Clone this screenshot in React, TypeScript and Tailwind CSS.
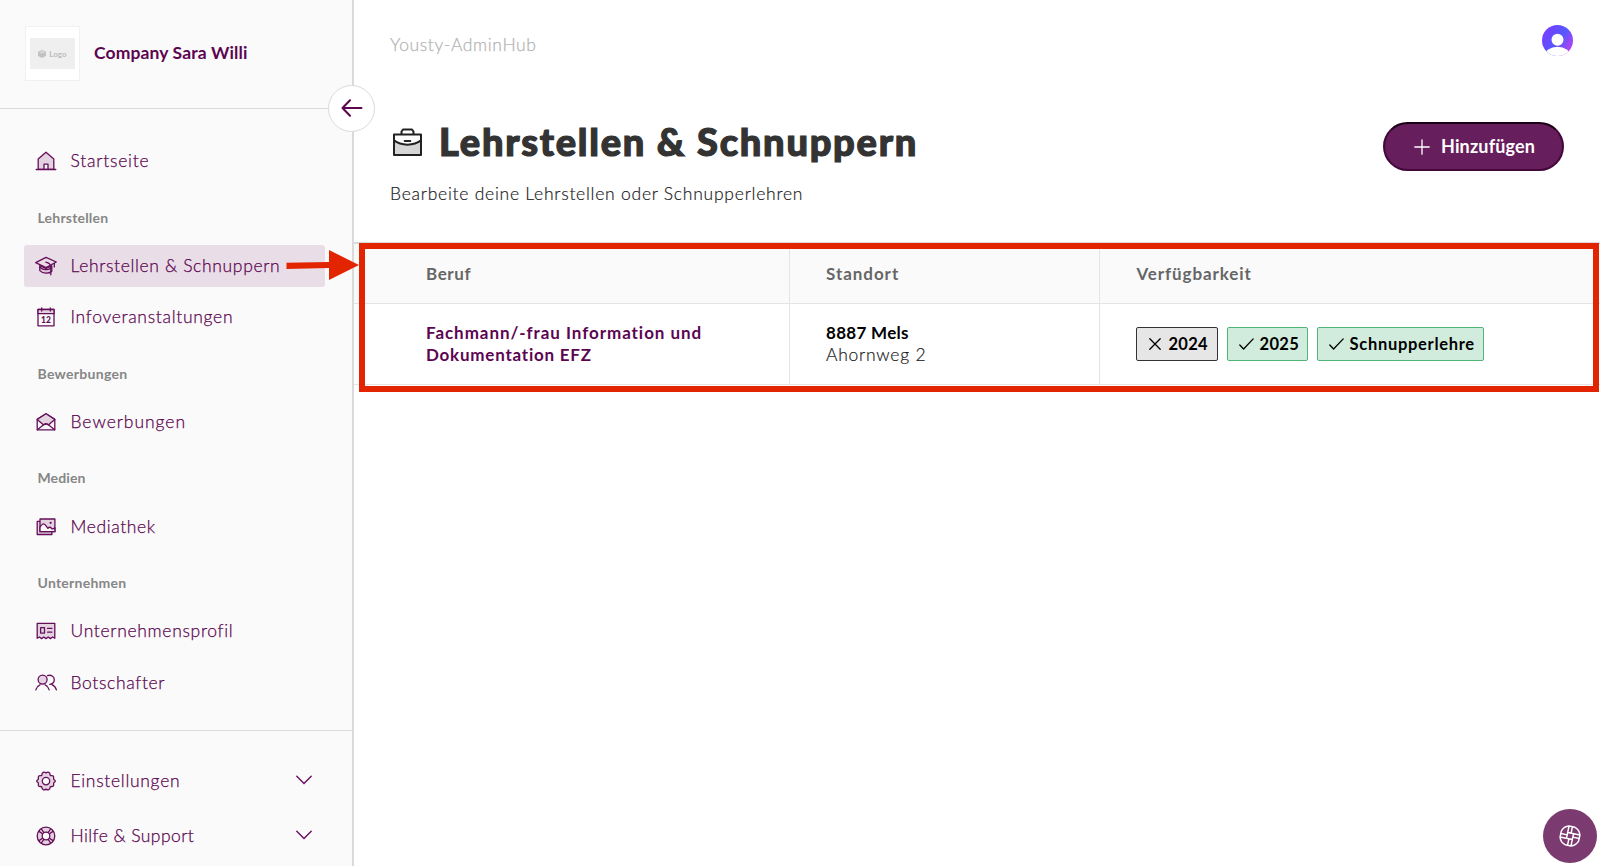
import type { ReactNode } from "react";

const ICON = "#650e5a";
const TINT = "#e3d2e0";

function Icon({ children, size = 24 }: { children: ReactNode; size?: number }) {
  return (
    <svg
      width={size}
      height={size}
      viewBox="0 0 24 24"
      fill="none"
      stroke={ICON}
      strokeWidth="1.3"
      strokeLinecap="round"
      strokeLinejoin="round"
      className="shrink-0"
    >
      {children}
    </svg>
  );
}

const HomeIcon = () => (
  <Icon>
    <path d="M4.2 20.3V10L12 3.2 19.8 10v10.3Z" fill={TINT} />
    <path d="M10 20.3v-5.1h4v5.1Z" fill="#fafafa" />
    <path d="M2.2 20.5h19.6" />
  </Icon>
);

const CapIcon = () => (
  <Icon>
    <path d="M5.8 11.6v5c3 3.2 9 3.500 12 .6v-5.400L12 14.500Z" fill="#dcc6d8" />
    <path d="M12 3.300 22.300 8 12 13.600 1.700 8.600Z" fill="#eadde8" />
    <path d="M5.800 13.200c2.800 2.800 7.800 3.400 11.200.7" />
    <path d="M11.800 8.200c3 .7 5 2 5 5v7.600M20.300 9.400v3.500" />
  </Icon>
);

const CalendarIcon = () => (
  <Icon>
    <path d="M4 4.5h16v16.3H4Z" />
    <path d="M4 4.5h16v4.2H4Z" fill={TINT} />
    <path d="M7.7 3v3M16.3 3v3" />
    <text
      x="12"
      y="17.9"
      textAnchor="middle"
      fontSize="8.5"
      fontWeight="900"
      fontFamily="Lato, sans-serif"
      fill={ICON}
      stroke="none"
    >
      12
    </text>
  </Icon>
);

const MailIcon = () => (
  <Icon>
    <path d="M3.2 9.4 12 3.8l8.8 5.6v10.5H3.2Z" />
    <path d="M3.2 9.4 12 3.8l8.8 5.6-6.2 5.4-2.6-1-2.6 1Z" fill={TINT} />
    <path d="m3.4 19.7 6.2-5 2.4-1 2.4 1 6.2 5" />
  </Icon>
);

const GalleryIcon = () => (
  <Icon>
    <path d="M5.6 6.4H3.2v13.1h14.7v-2.4" fill={TINT} />
    <path d="M6 4h14.9v12.7H6Z" fill={TINT} />
    <path d="M6 12.3c2-3.8 3.8-4.3 5.5-2.1l2.4 3.2c1.3-1.5 2.5-1.5 3.5-.2.9 1 2 .8 3.5-.5v4H6Z" fill="#fafafa" />
    <circle cx="16.6" cy="7.8" r=".5" />
  </Icon>
);

const ProfileIcon = () => (
  <Icon>
    <path d="M3.2 4.3h17.6v15l-2.2-1.3-2.2 1.6-2.2-1.6L12 19.6 9.8 18l-2.2 1.6L5.4 18l-2.2 1.3Z" fill={TINT} />
    <path d="M6.6 8.7h3.9v5.4H6.6ZM13.6 9.4h4.3M13.6 13.2h4.3" />
  </Icon>
);

const PeopleIcon = () => (
  <Icon>
    <circle cx="8.6" cy="8.6" r="4.5" fill={TINT} />
    <path d="M1.8 18.8c.6-2.3 2-3.9 4.2-4.9M11.2 13.9c2 .9 3.4 2.4 4 4.9" />
    <path d="M13.5 4.7c3.5-1.4 6.8.8 6.8 4 0 2.8-2 4.7-4.6 4.6M17.6 13.3c2.4.9 4.1 2.9 4.8 5.5" />
  </Icon>
);

const GearIcon = () => (
  <Icon>
    <path
      d="M9.2 3.4c1-.7 1.7-.3 2.8.5 1.1-.8 1.8-1.2 2.8-.5 1.2.6 1.4 1.5 1.4 2.9 1.3.5 2.3.1 3.1.8.6.6.5 1.3.3 2.2-.2 1 .2 1.3 1.2 1.9.7.5.7 1.2 0 1.7-1 .6-1.4.9-1.2 1.9.2 1 .3 1.6-.3 2.2-.8.7-1.8.3-3.1.8 0 1.4-.2 2.3-1.4 2.9-1 .6-1.7.2-2.8-.6-1.1.8-1.8 1.2-2.8.6-1.2-.6-1.4-1.5-1.4-2.9-1.3-.5-2.3-.1-3.1-.8-.6-.6-.5-1.2-.3-2.2.2-1-.2-1.3-1.2-1.9-.7-.5-.7-1.2 0-1.7 1-.6 1.400-.9 1.200-1.900-.2-.9-.3-1.600.3-2.200.8-.7 1.800-.3 3.100-.8 0-1.400.2-2.300 1.400-2.900Z"
      fill={TINT}
    />
    <circle cx="12" cy="12.1" r="3.7" fill="#fafafa" />
  </Icon>
);

const HelpIcon = () => (
  <Icon>
    <circle cx="12" cy="12" r="8.8" fill={TINT} />
    <path d="M5 7.4 8.9 10M7.4 5 10 8.9M19 7.4 15.1 10M16.6 5 14 8.9M5 16.6 8.9 14M7.4 19 10 15.1M19 16.6 15.1 14M16.6 19 14 15.1" />
    <circle cx="12" cy="12" r="3.8" fill="#fafafa" />
  </Icon>
);

const ChevronIcon = () => (
  <svg width="18" height="12" viewBox="0 0 18 12" fill="none" stroke={ICON} strokeWidth="1.4" strokeLinecap="round">
    <path d="m1.8 1.3 7.2 7.1 7.2-7.1" />
  </svg>
);

const CheckIcon = () => (
  <svg width="15" height="12" viewBox="0 0 15 12" fill="none" stroke="#000" strokeWidth="1.3" strokeLinecap="round">
    <path d="m.8 7 3.8 4L14.2.9" />
  </svg>
);

const CrossIcon = () => (
  <svg width="12" height="12" viewBox="0 0 12 12" fill="none" stroke="#000" strokeWidth="1.3" strokeLinecap="round">
    <path d="m.8.8 10.4 10.4M11.2.8.8 11.2" />
  </svg>
);

interface NavItemProps {
  icon: ReactNode;
  label: string;
  tracking: string;
  active?: boolean;
}

function NavItem({ icon, label, tracking, active }: NavItemProps) {
  return (
    <a className={`flex h-[42px] items-center rounded-[3px] pl-[9.5px] ${active ? "bg-[#e9dde7]" : ""}`}>
      {icon}
      <span
        className={`ml-[13px] whitespace-nowrap text-[17.5px] leading-[22px] font-light text-[#5c0551] [-webkit-text-stroke:0.25px_#5c0551] ${tracking}`}
      >
        {label}
      </span>
    </a>
  );
}

function NavSection({ title, tracking, children }: { title: string; tracking: string; children: ReactNode }) {
  return (
    <div>
      <div className={`h-[62.7px] pt-[25.5px] pl-[13.5px] text-[14px] leading-[20px] font-bold text-[#868686] ${tracking}`}>
        {title}
      </div>
      <div className="flex flex-col gap-[9.4px]">{children}</div>
    </div>
  );
}

function Sidebar() {
  return (
    <aside className="relative flex w-[354px] shrink-0 flex-col border-r-2 border-[#dadada] bg-[#fafafa]">
      <div className="flex h-[109px] shrink-0 items-center border-b border-[#dadada] pb-[1px] pl-[25px]">
        <div className="flex h-[55px] w-[55px] items-center justify-center border border-[#f1f1f1] bg-white">
          <div className="flex h-[31px] w-[45px] items-center justify-center gap-[3px] bg-[#efefef]">
            <svg width="8" height="8" viewBox="0 0 8 8" fill="#c2c2c4">
              <path d="M4 0 8 1.8v4.2L4 8 0 6V1.8Z" />
              <path d="M4 .9 6.8 2.2 4 3.5 1.2 2.2Z" fill="#dcdcde" />
            </svg>
            <span className="text-[8px] leading-none font-bold text-[#bcbcbe]">Logo</span>
          </div>
        </div>
        <span className="ml-[14px] text-[17.5px] font-bold tracking-[0.12px] text-[#5c0551]">Company Sara Willi</span>
      </div>

      <nav className="h-[622px] shrink-0 border-b border-[#dadada] pt-[31.2px] pr-[27px] pl-[24px]">
        <NavItem icon={<HomeIcon />} label="Startseite" tracking="tracking-[0.77px]" />
        <NavSection title="Lehrstellen" tracking="tracking-[0.2px]">
          <NavItem icon={<CapIcon />} label="Lehrstellen & Schnuppern" tracking="tracking-[0.65px]" active />
          <NavItem icon={<CalendarIcon />} label="Infoveranstaltungen" tracking="tracking-[0.7px]" />
        </NavSection>
        <NavSection title="Bewerbungen" tracking="tracking-[0.3px]">
          <NavItem icon={<MailIcon />} label="Bewerbungen" tracking="tracking-[0.95px]" />
        </NavSection>
        <NavSection title="Medien" tracking="tracking-[0.1px]">
          <NavItem icon={<GalleryIcon />} label="Mediathek" tracking="tracking-[0.6px]" />
        </NavSection>
        <NavSection title="Unternehmen" tracking="tracking-[0.25px]">
          <NavItem icon={<ProfileIcon />} label="Unternehmensprofil" tracking="tracking-[0.68px]" />
          <NavItem icon={<PeopleIcon />} label="Botschafter" tracking="tracking-[0.65px]" />
        </NavSection>
      </nav>

      <div className="flex flex-col gap-[13px] pt-[29px] pr-[39px] pl-[24px]">
        <div className="flex items-center justify-between">
          <NavItem icon={<GearIcon />} label="Einstellungen" tracking="tracking-[0.7px]" />
          <ChevronIcon />
        </div>
        <div className="flex items-center justify-between">
          <NavItem icon={<HelpIcon />} label="Hilfe & Support" tracking="tracking-[0.43px]" />
          <ChevronIcon />
        </div>
      </div>

      <button className="absolute top-[84.5px] left-[328px] flex size-[47px] items-center justify-center rounded-full border border-[#dadada] bg-white">
        <svg width="22" height="18" viewBox="0 0 22 18" fill="none" stroke="#5c0551" strokeWidth="2" strokeLinecap="round" strokeLinejoin="round">
          <path d="M20.500 9H1.500M9 1.200 1.500 9 9 16.800" />
        </svg>
      </button>
    </aside>
  );
}

function Badge({ label, ok, tracking, width }: { label: string; ok?: boolean; tracking: string; width: string }) {
  return (
    <span
      className={`flex h-[34px] items-center rounded-[2px] border text-[16.5px] font-bold text-black ${width} ${tracking} ${
        ok ? "gap-[5.5px] border-[#4fb477] bg-[#d1ecdd] pl-[11px]" : "gap-[7.5px] border-[#333] bg-[#e6e6e6] pl-[12px]"
      }`}
    >
      {ok ? <CheckIcon /> : <CrossIcon />}
      <span className="whitespace-nowrap">{label}</span>
    </span>
  );
}

function JobsTable() {
  return (
    <div className="border-t-2 border-b border-t-[#dadada] border-b-[#e4e4e4]">
      <div className="grid h-[60px] grid-cols-[436px_310px_1fr] border-b border-[#e4e4e4] bg-[#fafafa] text-[17px] leading-[22px] font-bold text-[#666]">
        <div className="border-r border-[#e4e4e4] pt-[18.5px] pl-[72px] tracking-[0.6px]">Beruf</div>
        <div className="border-r border-[#e4e4e4] pt-[18.5px] pl-[36px] tracking-[0.95px]">Standort</div>
        <div className="pt-[18.5px] pl-[36.5px] tracking-[0.9px]">Verfügbarkeit</div>
      </div>
      <div className="grid h-[80px] grid-cols-[436px_310px_1fr] text-[17px] leading-[22.4px]">
        <div className="border-r border-[#e4e4e4] pt-[17.6px] pl-[72px] font-bold text-[#5c0551]">
          <div className="tracking-[0.94px]">Fachmann/-frau Information und</div>
          <div className="tracking-[0.77px]">Dokumentation EFZ</div>
        </div>
        <div className="border-r border-[#e4e4e4] pt-[17.6px] pl-[36px]">
          <div className="font-bold tracking-[0.3px] text-black">8887 Mels</div>
          <div className="text-[17.5px] font-light tracking-[0.75px] text-[#222] [-webkit-text-stroke:0.2px_#222]">
            Ahornweg 2
          </div>
        </div>
        <div className="flex items-start gap-[9px] pt-[23px] pl-[36px]">
          <Badge label="2024" width="w-[82px]" tracking="tracking-[0.3px]" />
          <Badge label="2025" width="w-[81px]" tracking="tracking-[0.35px]" ok />
          <Badge label="Schnupperlehre" width="w-[167px]" tracking="tracking-[0.7px]" ok />
        </div>
      </div>
    </div>
  );
}

export default function App() {
  return (
    <div className="relative flex h-[866px] w-[1600px] overflow-hidden bg-white font-['Lato',sans-serif]">
      <Sidebar />

      <main className="flex min-w-0 flex-1 flex-col">
        <header className="flex h-[90px] shrink-0 justify-between pr-[27px] pl-[36px]">
          <span className="pt-[34px] text-[17.5px] leading-[22px] font-light tracking-[0.62px] text-[#b4b4b4] [-webkit-text-stroke:0.25px_#b4b4b4]">
            Yousty-AdminHub
          </span>
          <svg width="31" height="31" viewBox="0 0 31 31" className="mt-[25px]">
            <defs>
              <linearGradient id="avatar" x1="0" y1="0.2" x2="1" y2="0.8">
                <stop offset="0" stopColor="#7a3cff" />
                <stop offset=".55" stopColor="#5558ff" />
                <stop offset="1" stopColor="#c63df0" />
              </linearGradient>
              <clipPath id="round">
                <circle cx="15.5" cy="15.5" r="15.5" />
              </clipPath>
            </defs>
            <g clipPath="url(#round)">
              <rect width="31" height="31" fill="url(#avatar)" />
              <circle cx="15.5" cy="14.8" r="6" fill="#fff" />
              <ellipse cx="15.5" cy="31" rx="13" ry="9.3" fill="#fff" />
            </g>
          </svg>
        </header>

        <div className="flex h-[152px] shrink-0 justify-between pr-[36px] pl-[36px]">
          <div>
            <div className="flex h-[80px] items-center pt-[24px]">
              <svg width="31" height="29" viewBox="0 0 31 29" fill="none" stroke="#222" strokeWidth="2" strokeLinejoin="round" className="ml-[2px]">
                <path d="M2 11.5c7 6.3 20 6.3 27 0V27H2Z" fill="#d6d6d6" stroke="none" />
                <path d="M2 6.5h27V27H2ZM9.5 6.500v-3l1.500-2h9l1.500 2v3M2 12.300c7 5.800 20 5.800 27 0" />
                <path d="M12.700 13h5.600" strokeLinecap="round" />
              </svg>
              <h1 className="-mt-[2px] ml-[16px] text-[38px] leading-[44px] font-black tracking-[1.75px] whitespace-nowrap text-[#333] [-webkit-text-stroke:1.2px_#333]">
                Lehrstellen &amp; Schnuppern
              </h1>
            </div>
            <p className="pt-[13px] text-[17.5px] leading-[22px] font-light tracking-[0.75px] text-[#222] [-webkit-text-stroke:0.2px_#222]">
              Bearbeite deine Lehrstellen oder Schnupperlehren
            </p>
          </div>
          <button className="mt-[32px] flex h-[49px] w-[181px] items-center rounded-full border-2 border-[#43073a] border-t-[#1c0018] bg-[#671e5c] pl-[29px] text-[18px] font-bold text-white">
            <svg width="16" height="16" viewBox="0 0 16 16" stroke="#fff" strokeWidth="1.3" strokeLinecap="round">
              <path d="M8 .8v14.4M.8 8h14.4" />
            </svg>
            <span className="ml-[11px] tracking-[0.15px]">Hinzufügen</span>
          </button>
        </div>

        <JobsTable />
      </main>

      {/* callout around the table */}
      <div className="absolute top-[242.5px] left-[359px] h-[149px] w-[1240px] border-6 border-[#e32400]" />
      <svg width="74" height="32" viewBox="0 0 74 32" className="absolute top-[249px] left-[286px]">
        <path d="M.5 13.7 43 13V1l30 15-30 15V19L.5 20Z" fill="#e32400" />
      </svg>

      <button className="absolute top-[809px] left-[1543px] flex size-[54px] items-center justify-center rounded-full bg-[#7b3a70]">
        <svg width="24" height="24" viewBox="0 0 24 24" fill="none" stroke="#fff" strokeWidth="1.5" strokeLinejoin="round">
          <g transform="rotate(12 12 12)">
            <path d="M9 2.5h6c3.5 1 5.500 3 6.500 6.500v6c-1 3.500-3 5.500-6.500 6.500H9c-3.500-1-5.500-3-6.500-6.500V9c1-3.500 3-5.500 6.500-6.500Z" />
            <path d="M9 2.500V15M15 9v12.500M9 9h12.500M2.500 15H15M12.500 2.500V9M11.500 15v6.500M2.500 11.500H9M15 12.500h6.500" />
          </g>
        </svg>
      </button>
    </div>
  );
}
